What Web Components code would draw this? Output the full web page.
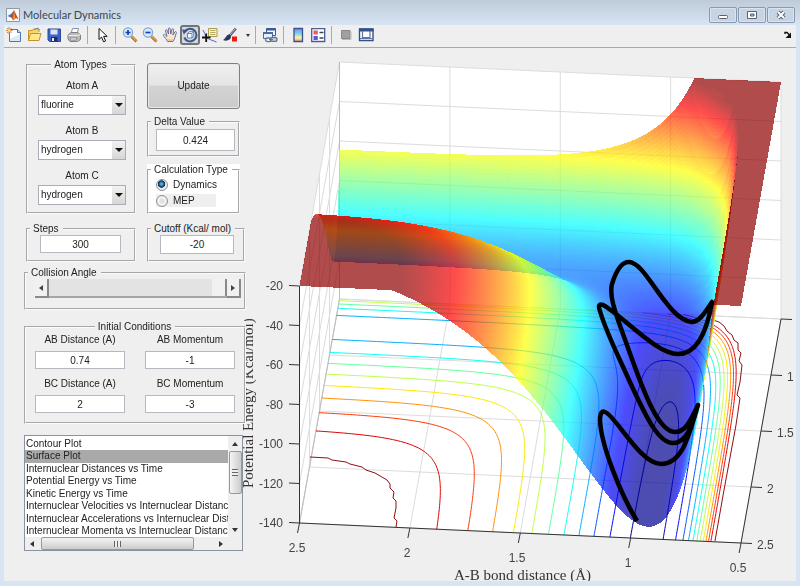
<!DOCTYPE html>
<html lang="en">
<head>
<meta charset="utf-8">
<title>Molecular Dynamics</title>
<style>
body{margin:0;background:#efefef;color:#222;font:10px/12px "Liberation Sans",Arial,sans-serif}
</style>
</head>
<body>
<md-window></md-window>
<script>
const define = (name, html, setup) => customElements.define(name, class extends HTMLElement {
  connectedCallback() {
    if (this.shadowRoot) return;
    const root = this.attachShadow({mode: 'open'});
    root.innerHTML = typeof html === 'function' ? html(this) : html;
    if (setup) setup(root, this);
  }
});

/* ---------- toolbar ---------- */
const icons = {
  new: '<path d="M3.500 2.500h8l3 3v9h-11z" fill="#fff" stroke="#4c76b5"/><path d="M4 12l10-5v7H4z" fill="#dde9f8"/><path d="M11.500 2.500v3h3" fill="#c6d8ef" stroke="#4c76b5"/><path d="M3 0v7M0 3.500h6.500M1 1l4.500 5M5.500 1L1 6" stroke="#d8814c"/><circle cx="3.200" cy="3.500" r="1.300" fill="#ffe9a0"/>',
  open: '<path d="M2.500 13.500v-10h4l1-1.500h5.500v3" fill="#f6d667" stroke="#c49325"/><path d="M2.500 13.500L4.500 6.500h10.500l-2 7z" fill="#ffe88c" stroke="#c49325"/><path d="M8 2.500l4-1.500 1.500 2" fill="none" stroke="#6b92b4"/>',
  save: '<path d="M2 2h12.500v12.500H3.500L2 13z" fill="#3f63c4" stroke="#2f479c"/><path d="M4.500 2.500h7v5h-7z" fill="#d9e5f7"/><path d="M5 10h6.500v4.500H5z" fill="#1d2e69"/><path d="M6 11h2v3H6z" fill="#e9eef8"/>',
  print: '<path d="M5 7L6.500 1.500h6L11 7z" fill="#fff" stroke="#8295b1"/><path d="M2 8l3-2.500h7L14.500 8v4.500L11.500 14.500H4L2 12z" fill="#b8bbc0" stroke="#7d8188"/><path d="M2.500 8.500h9l3-1" stroke="#eee" fill="none"/><path d="M4 11h7l-1 2H4.500z" fill="#f8f8f8" stroke="#777" stroke-width=".7"/><circle cx="12.500" cy="10" r=".8" fill="#d6bb3c"/>',
  pointer: '<path d="M5 1.500v11l2.600-2.400 2 4.700 2-.9-2-4.500h3.600z" fill="#fff" stroke="#111"/>',
  zoomin: '<path d="M9.500 9.500l5 5" stroke="#b9772c" stroke-width="3"/><path d="M9.500 9l4.800 4.800" stroke="#f0bd73"/><circle cx="6" cy="5.500" r="4.600" fill="#d5ecfb" stroke="#80a9d6" stroke-width="1.300"/><path d="M3.500 5.500h5M6 3v5" stroke="#1d3bb0" stroke-width="1.700"/>',
  zoomout: '<path d="M9.500 9.500l5 5" stroke="#b9772c" stroke-width="3"/><path d="M9.500 9l4.800 4.800" stroke="#f0bd73"/><circle cx="6" cy="5.500" r="4.600" fill="#d5ecfb" stroke="#80a9d6" stroke-width="1.300"/><path d="M3.500 5.500h5" stroke="#1d3bb0" stroke-width="1.700"/>',
  hand: '<path d="M5.500 14.500C4.500 12 2.500 10.500 1.500 8.500c-.3-1.300 1.100-1.500 1.800-.6L5 9.500 3.500 4c-.2-1.500 1.300-1.700 1.700-.5L6.500 7 6.300 2c0-1.500 1.600-1.500 1.900-.1L8.800 7l1-4.500c.4-1.300 1.800-1 1.700.3L11 8l1.800-3c.8-1 2-.3 1.500.9-1 2.500-1.300 6-3.300 8.600z" fill="#fbe3c8" stroke="#576a9c" stroke-width=".9"/><path d="M5.500 12.500c2 1 4 1 6 0" stroke="#dfae80" fill="none"/>',
  rotate: '<path d="M3.200 4.200A6.300 6.300 0 1 1 2.300 10.500" fill="none" stroke="#38578f" stroke-width="2"/><path d="M0 2.500l6 .5-4.200 4.500z" fill="#38578f"/><path d="M5.500 6.500h4.500v4.500H5.500zM5.500 6.500l2-1.800h4.200v4.500L10 11M10 6.500l1.700-1.800" fill="#f3f7fd" stroke="#4d6a9f" stroke-width=".8"/>',
  cursor: '<path d="M1 3c1.500 3 2 4 2.500 6s4 3.500 11 6" fill="none" stroke="#665ae2"/><path d="M6.500 1.500h8.500v8H6.500z" fill="#fbf6b4" stroke="#a69b51"/><path d="M8 3.500h5.500M8 5.500h5.500M8 7.500h5.500" stroke="#b7ad69"/><path d="M0 10.500h8.500M4.200 6.500v8.500" stroke="#111" stroke-width="1.800"/>',
  brush: '<path d="M13.800 1.500L7.500 9" stroke="#4c5869" stroke-width="2.600"/><path d="M13.500 1.500L8 8" stroke="#b3c1d1"/><path d="M7.500 7.500c-3-.5-3 3-6.500 5.500 3.500 1.700 8 0 8-3.500z" fill="#293b5d"/><path d="M10 9.500h5v5h-5z" fill="#f01a13"/>',
  link: '<path d="M4.500 1.500h9v7h-9z" fill="#eff5ff" stroke="#3c5998"/><path d="M4 2.500h10" stroke="#3c5998" stroke-width="2"/><path d="M1.500 5.500h9v6h-9z" fill="#e6effb" stroke="#4b69a4"/><path d="M1 6h10" stroke="#4b69a4" stroke-width="2"/><rect x="3.500" y="11" width="6" height="3.600" rx="1.800" fill="#e9eef4" stroke="#61758f" stroke-width="1.300"/><rect x="8.500" y="10.500" width="6.500" height="3.800" rx="1.900" fill="#cbd5e1" stroke="#61758f" stroke-width="1.300"/><path d="M7 12.700h4" stroke="#4e617b"/>',
  colorbar: '<defs><linearGradient id="cb" x2="0" y2="1"><stop stop-color="#8a86ee"/><stop offset=".4" stop-color="#79d5f0"/><stop offset=".7" stop-color="#fff29b"/><stop offset="1" stop-color="#f59a72"/></linearGradient></defs><path d="M4 1.500h8.500v13H4z" fill="url(#cb)" stroke="#39518c" stroke-width="1.300"/>',
  legend: '<path d="M1.700 1.700h13v12.800h-13z" fill="#fff" stroke="#465f99" stroke-width="1.300"/><path d="M3.500 3.500h4.300v4H3.500z" fill="#ef5661"/><path d="M3.500 9h4.300v4H3.500z" fill="#5a58df"/><path d="M9.500 5.500h4M9.500 11h4" stroke="#444" stroke-width="1.400"/>',
  hide: '<path d="M3.500 3.500h8.500v8H3.500z" fill="#a0a0a0" stroke="#888"/><path d="M4 12.500h9v-8" fill="none" stroke="#bbb"/>',
  dock: '<path d="M1.500 2h13.500v11.500H1.500z" fill="#fff" stroke="#354f8d" stroke-width="1.400"/><path d="M1 3h14.500" stroke="#354f8d" stroke-width="3"/><path d="M4.500 4v6.500h7.500V4M2 11.500h12.500" fill="none" stroke="#60759f" stroke-width="1.200"/>'
};
define('md-tool', el => `<style>
:host{display:block;flex:none}
button{box-sizing:border-box;display:grid;place-items:center;width:20px;height:20px;margin:0;padding:0;border:1px solid transparent;border-radius:3px;background:none}
button[aria-pressed=true]{border:2px solid #747474;background:#d5d9df}
svg{display:block;width:16px;height:16px}
</style><button type="button" aria-label="${el.getAttribute('label')}" aria-pressed="${el.hasAttribute('pressed')}"><svg viewBox="0 0 16 16" fill="none">${icons[el.getAttribute('icon')]}</svg></button>`);

const tool = (i, l, p = '') => `<md-tool icon="${i}" label="${l}" ${p}></md-tool>`;
define('md-toolbar', `<style>
:host{display:flex;align-items:center;box-sizing:border-box;height:23px;padding-bottom:2px;background:#efefef;border-bottom:1px solid #aaa}
i{flex:none;width:1px;height:18px;margin:0 4px 0 3px;background:#aaa}
.drop{display:grid;place-items:center;width:12px;height:20px;border:0;padding:0;background:none}
.drop::before{content:"";border:2px solid transparent;border-top:3px solid #333;border-bottom:0;margin-left:4px}
.undock{margin:0 4px 0 auto;padding:0;border:0;background:none;width:8px;height:8px}
svg{display:block}
</style>${tool('new','New Figure')}${tool('open','Open File')}${tool('save','Save Figure')}${tool('print','Print Figure')}<i></i>${tool('pointer','Edit Plot')}<i></i>${tool('zoomin','Zoom In')}${tool('zoomout','Zoom Out')}${tool('hand','Pan')}${tool('rotate','Rotate 3D','pressed')}${tool('cursor','Data Cursor')}${tool('brush','Brush Data')}<button class="drop" type="button" aria-label="Brush colours"></button><i></i>${tool('link','Link Plot')}<i></i>${tool('colorbar','Insert Colorbar')}${tool('legend','Insert Legend')}<i></i>${tool('hide','Hide Plot Tools')}${tool('dock','Show Plot Tools')}
<button class="undock" type="button" aria-label="Dock Figure"><svg width="8" height="8" viewBox="0 0 8 8"><path d="M1 3V1.500h2L5.500 4" fill="none" stroke="#111" stroke-width="1.400"/><path d="M7 1.500V7H1.500z" fill="#111"/></svg></button>`);

define('md-titlebar', `<style>
:host{display:flex;align-items:center;box-sizing:border-box;height:25px;padding:5px 5px 0 6px;background:linear-gradient(#bfcbd8,#d6e4f3)}
.logo{width:14px;height:14px;margin-right:3px}
h1{margin:0;flex:1;font:11px/16px Lato,"Open Sans",sans-serif;color:#3c4650}
button{box-sizing:border-box;display:grid;place-items:center;width:28px;height:16px;margin-left:1px;padding:0;border:1px solid #8899b0;border-radius:2px;background:#c7d4e4;box-shadow:inset 0 0 0 1px #d9e4f0}
</style><svg class="logo" viewBox="0 0 14 14"><path d="M.5.500h13v13H.5z" fill="#f7f8fa" stroke="#8d99a8"/><path d="M1.500 8L5 6l3-3.500L6 10l-1.500-.8z" fill="#3f74ac"/><path d="M8 2l4.500 9.500-2.500-1.500-3 2.500L5.500 9z" fill="#cc481c"/><path d="M8 2l1.200 8L7 12z" fill="#f39a40"/></svg>
<h1>Molecular Dynamics</h1>
<button type="button" aria-label="Minimize"><svg width="12" height="10"><rect x="1.500" y="5.500" width="9" height="3" rx="1" fill="#fff" stroke="#5b6170"/></svg></button>
<button type="button" aria-label="Maximize"><svg width="12" height="10"><path d="M1.500 1.500h9v7h-9z" fill="#fff" stroke="#5b6170"/><path d="M4.500 4h3.500v2H4.500z" fill="#b4c0cf" stroke="#5b6170"/></svg></button>
<button type="button" aria-label="Close"><svg width="12" height="10"><path d="M3 2l6 6M9 2L3 8" stroke="#5b6170" stroke-width="4"/><path d="M3 2l6 6M9 2L3 8" stroke="#fff" stroke-width="2"/></svg></button>`);

/* ---------- controls ---------- */
define('md-group', el => `<style>
:host{display:block}
fieldset{box-sizing:border-box;height:100%;min-width:0;margin:0;padding:0;border:2px groove #fbfbfb}
legend{margin-left:2px;padding:0 4px 0 3px;height:12px;line-height:12px;white-space:nowrap}
:host([centered]) legend{margin:0 auto}
</style><fieldset><legend>${el.getAttribute('label')}</legend><slot></slot></fieldset>`);

define('md-select', el => `<style>
:host{display:flex;flex-direction:column;align-items:center;gap:3px}
.box{display:grid;width:88px;height:20px}
select{grid-area:1/1;appearance:none;box-sizing:border-box;width:100%;height:20px;margin:0;padding:0 16px 0 2px;border:1px solid #a9adb5;border-radius:0;background:#fff;color:#222;font:inherit}
.arrow{grid-area:1/1;justify-self:end;display:grid;place-items:center;width:13px;margin:1px;background:linear-gradient(#f2f2f2,#d6d6d6);pointer-events:none}
.arrow::before{content:"";border:4px solid transparent;border-top:4px solid #111;border-bottom:0}
</style><label for="s">${el.getAttribute('label')}</label><span class="box"><select id="s">${['fluorine','hydrogen','chlorine'].map(a => `<option${a === el.getAttribute('value') ? ' selected' : ''}>${a}</option>`).join('')}</select><span class="arrow"></span></span>`);

define('md-field', el => `<style>
:host{display:flex;flex-direction:column;align-items:center;gap:5px}
input{box-sizing:border-box;width:100%;height:var(--h,18px);margin:0;padding:0;border:1px solid #b6b8c0;background:#fff;color:#222;font:inherit;text-align:center}
</style>${el.hasAttribute('label') ? `<label for="f">${el.getAttribute('label')}</label>` : ''}<input id="f" type="text" value="${el.getAttribute('value')}" aria-label="${el.getAttribute('label') || el.getAttribute('name')}">`);

define('md-button', `<style>
:host{display:block}
button{width:100%;height:46px;margin:0;padding:0;border:1px solid #808080;border-radius:3px;background:linear-gradient(#f0f0f0,#e4e4e4 48%,#d3d3d3 50%,#cbcbcb);box-shadow:inset 0 0 0 1px #e8e8e8;color:#222;font:inherit}
</style><button type="button"><slot></slot></button>`);

define('md-radios', `<style>
:host{display:block;padding:1px 0 3px 7px}
label{display:flex;align-items:center;gap:4px;width:60px;height:16px}
label.shade{background:linear-gradient(#efefef,#efefef) 0 1px/100% 13px no-repeat}
input{appearance:none;box-sizing:border-box;flex:none;width:12px;height:12px;margin:0 1px 0 0;border:1px solid #8f9297;border-radius:50%;background:radial-gradient(#e2e2e2 30%,#f6f6f6 50%,#ccc)}
input:checked{background:radial-gradient(circle at 45% 40%,#7fd0ee,#1d608c 28%,#0e3350 42%,#e6ecf2 50%)}
</style><label><input type="radio" name="calc" checked>Dynamics</label><label class="shade"><input type="radio" name="calc">MEP</label>`);

define('md-slider', `<style>
:host{display:flex;height:19px}
button{box-sizing:border-box;width:14px;margin:0;padding:0;display:grid;place-items:center;border:solid;border-width:0 2px 2px 0;border-color:#8a8a8a;background:#f1f1f1}
button::before{content:"";border:3px solid transparent}
.l::before{border-right:4px solid #444;border-left:0}
.r::before{border-left:4px solid #444;border-right:0}
input{appearance:none;box-sizing:border-box;flex:1;min-width:0;height:19px;margin:0;background:#e3e3e3;border-bottom:2px solid #a5a5a5}
input::-webkit-slider-thumb{appearance:none;box-sizing:border-box;width:15px;height:17px;background:#f1f1f1;border:solid #8a8a8a;border-width:0 2px 0 0}
</style><button class="l" type="button" aria-label="Decrease"></button><input type="range" min="0" max="180" value="180" aria-label="Collision Angle"><button class="r" type="button" aria-label="Increase"></button>`);

define('md-list', `<style>
:host{display:grid;grid-template-columns:1fr 14px;grid-template-rows:101px 13px;box-sizing:border-box;border:1px solid #8b93a0;background:#fff}
select{grid-area:1/1;box-sizing:border-box;width:100%;height:101px;min-width:0;margin:0;padding:2px 0 0;border:0;outline:0;background:#fff;color:#222;font:inherit;overflow:hidden}
option{box-sizing:border-box;height:12px;min-height:12px;padding:0 0 0 1px;line-height:12px;overflow:hidden;white-space:nowrap}
option:nth-child(even){height:13px;min-height:13px}
option:checked{background:#a9a9a9 linear-gradient(#a9a9a9,#a9a9a9);color:#222}
.bar{display:flex;align-items:center;background:#efefef}
.v{flex-direction:column;grid-area:1/2;padding:6px 0 5px}
.h{grid-area:2/1;padding:0 5px}
.corner{background:#efefef}
.bar::before,.bar::after{content:"";border:3px solid transparent}
.v::before{border-bottom:4px solid #333;border-top:0}.v::after{border-top:4px solid #333;border-bottom:0}
.h::before{border-right:4px solid #333;border-left:0}.h::after{border-left:4px solid #333;border-right:0}
b{box-sizing:border-box;display:grid;place-items:center;border:1px solid #999;border-radius:2px}
.v b{width:13px;height:43px;margin:5px 0 auto;background:linear-gradient(90deg,#f4f4f4,#ccc)}
.h b{height:13px;width:153px;margin:0 auto 0 7px;background:linear-gradient(#f4f4f4,#ccc)}
.v b::before{content:"";width:6px;height:7px;background:repeating-linear-gradient(#666 0 1px,#eee 1px 3px)}
.h b::before{content:"";height:6px;width:7px;background:repeating-linear-gradient(90deg,#666 0 1px,#eee 1px 3px)}
</style><select size="8" aria-label="Plot type"><option>Contour Plot</option><option selected>Surface Plot</option><option>Internuclear Distances vs Time</option><option>Potential Energy vs Time</option><option>Kinetic Energy vs Time</option><option>Internuclear Velocities vs Internuclear Distance</option><option>Internuclear Accelerations vs Internuclear Distance</option><option>Internuclear Momenta vs Internuclear Distance</option></select><span class="bar v"><b></b></span><span class="bar h"><b></b></span><span class="corner"></span>`);

/* ---------- surface plot ---------- */
const PX = 246, PY = 48, PW = 550, PH = 533;
// Oblique projection of (AB, BC, energy) to plot units.
const project = (x, y, z) => [
  299.5 + (2.5 - x) * 220.75 + (2.5 - y) * 20,
  523 + (2.5 - x) * 10 - (2.5 - y) * 112 - (z + 140) * 1.975
];
// LEPS potential of the collinear F-H-H system, kcal/mol.
const FH = [134, 2.2187, 0.921, 0.2], HH = [105, 2, 0.7419, 0.167];
function pair([d, b, r0, k], r) {
  const e = Math.exp(-b * (r - r0)), c = d / (4 * (1 + k));
  return [c * ((3 + k) * e * e - (2 + 6 * k) * e), c * ((1 + 3 * k) * e * e - (6 + 2 * k) * e)];
}
function energy(x, y) {
  const [q1, a] = pair(FH, x), [q2, b] = pair(HH, y), [q3, c] = pair(FH, x + y);
  return Math.min(-20, q1 + q2 + q3 - Math.sqrt(((a - b) ** 2 + (b - c) ** 2 + (c - a) ** 2) / 2));
}
function jet(z) {
  const t = Math.max(.016, Math.min(.984, (z + 134) / 114));
  const f = c => Math.max(0, Math.min(1, 1.5 - Math.abs(4 * t - c))) * 255;
  return [f(3), f(2), f(1)];
}
function paint(canvas) {
  const g = canvas.getContext('2d', {willReadFrequently: true});
  g.translate(-PX, -PY);
  const line = (pts, color, width = 1) => {
    g.beginPath(); pts.forEach((p, i) => i ? g.lineTo(...p) : g.moveTo(...p));
    g.strokeStyle = color; g.lineWidth = width; g.stroke();
  };
  const face = pts => { g.beginPath(); pts.forEach(p => g.lineTo(...project(...p))); g.fillStyle = '#fff'; g.fill(); };
  face([[2.5,2.5,-140],[.5,2.5,-140],[.5,.5,-140],[2.5,.5,-140]]);
  face([[2.5,.5,-140],[.5,.5,-140],[.5,.5,-20],[2.5,.5,-20]]);
  face([[2.5,2.5,-140],[2.5,.5,-140],[2.5,.5,-20],[2.5,2.5,-20]]);
  const grid = '#dcdcdc', P = project;
  for (let v = .5; v <= 2.5; v += .5) {
    line([P(v,2.5,-140), P(v,.5,-140), P(v,.5,-20)], grid);
    line([P(2.5,v,-20), P(2.5,v,-140), P(.5,v,-140)], grid);
  }
  for (let z = -140; z <= -20; z += 20) line([P(2.5,2.5,z), P(2.5,.5,z), P(.5,.5,z)], grid);
  line([P(2.5,2.5,-140), P(2.5,.5,-140), P(2.5,.5,-20)], '#bdbdbd');

  // Contours on the floor, by marching squares.
  const m = 160, step = 2 / m, val = [];
  for (let j = 0; j <= m; j++) { val.push([]); for (let i = 0; i <= m; i++) val[j].push(energy(2.5 - i * step, .5 + j * step)); }
  for (let k = 1; k < 12; k++) {
    const level = -20.3 - 10 * k, [r, gr, b] = jet(level);
    g.beginPath();
    for (let j = 0; j < m; j++) for (let i = 0; i < m; i++) {
      const c = [[i,j],[i+1,j],[i+1,j+1],[i,j+1]], hit = [];
      for (let e = 0; e < 4; e++) {
        const [ax, ay] = c[e], [bx, by] = c[(e + 1) % 4], va = val[ay][ax], vb = val[by][bx];
        if ((va < level) !== (vb < level)) {
          const t = (level - va) / (vb - va);
          hit.push(P(2.5 - (ax + (bx - ax) * t) * step, .5 + (ay + (by - ay) * t) * step, -140));
        }
      }
      for (let h = 0; h + 1 < hit.length; h += 2) { g.moveTo(...hit[h]); g.lineTo(...hit[h + 1]); }
    }
    g.strokeStyle = `rgb(${r|0},${gr|0},${b|0})`; g.lineWidth = 1; g.stroke();
  }
  line([[310,457],[328,458],[332,460],[346,462],[350,464],[362,467],[366,470],[375,473],[387,480],[390,484],[390,488],[394,492],[393,498],[396,501],[396,508],[394,518],[397,521],[396,527]], '#8f1010');
  line([[713,320],[719,322],[724,326],[727,331],[732,335],[734,340],[738,343],[738,350],[741,353],[739,361],[742,365],[740,382],[737,395],[740,398],[736,425],[724,490],[715,541]], '#8f1010');

  // Translucent surface, painted far to near.
  const img = g.getImageData(0, 0, PW, PH), d = Float32Array.from(img.data), alpha = .7;
  const tri = (a, b, c, col) => {
    let area = (b[0]-a[0])*(c[1]-a[1]) - (b[1]-a[1])*(c[0]-a[0]);
    if (area < 0) { [b, c] = [c, b]; area = -area; }
    if (!area) return;
    const x0 = Math.max(0, Math.floor(Math.min(a[0],b[0],c[0]))), x1 = Math.min(PW-1, Math.ceil(Math.max(a[0],b[0],c[0])));
    const y0 = Math.max(0, Math.floor(Math.min(a[1],b[1],c[1]))), y1 = Math.min(PH-1, Math.ceil(Math.max(a[1],b[1],c[1])));
    const side = (p, q, x, y) => (q[0]-p[0])*(y-p[1]) - (q[1]-p[1])*(x-p[0]);
    for (let y = y0; y <= y1; y++) for (let x = x0; x <= x1; x++) {
      const u = x + .5013, v = y + .5017;
      if (side(a,b,u,v) >= 0 && side(b,c,u,v) >= 0 && side(c,a,u,v) >= 0) {
        const o = (y * PW + x) * 4;
        for (let n = 0; n < 3; n++) d[o+n] = d[o+n] * (1 - alpha) + col[n] * alpha;
        d[o+3] = 255;
      }
    }
  };
  const n = 400, s = 2 / n;
  const vert = (i, j) => { const x = 2.5 - i * s, y = .5 + j * s, z = energy(x, y), p = P(x, y, z); return [p[0] - PX, p[1] - PY, z]; };
  let row = Array.from({length: n + 1}, (_, i) => vert(i, 0));
  for (let j = 1; j <= n; j++) {
    const next = Array.from({length: n + 1}, (_, i) => vert(i, j));
    for (let i = 0; i < n; i++) {
      const a = row[i], b = row[i+1], c = next[i+1], e = next[i], col = jet((a[2] + b[2] + c[2] + e[2]) / 4);
      tri(a, b, c, col); tri(a, c, e, col);
    }
    row = next;
  }
  img.data.set(d);
  g.putImageData(img, 0, 0);
}
const ticks = (() => {
  let lines = 'M299.500 286V523L741 543L781 319', text = '';
  for (let k = 0; k < 7; k++) {
    const y = 286 + k * 39.5;
    lines += `M299.500 ${y}L289 ${y - .5}`;
    text += `<text x="283" y="${Math.round(y) + 4}" text-anchor="end">${-20 - 20 * k}</text>`;
  }
  ['2.5', '2', '1.5', '1', '0.5'].forEach((t, k) => {
    const x = 299.5 + k * 110.4, y = 523 + k * 5;
    lines += `M${x} ${y}l-2 10`;
    text += `<text x="${Math.round(x) - 3}" y="${Math.round(y) + 29}" text-anchor="middle">${t}</text>`;
  });
  ['', '1', '1.5', '2', '2.5'].forEach((t, k) => {
    const x = 781 - 10 * k, y = 319 + 56 * k;
    lines += `M${x} ${y}l11 .5`;
    if (t) text += `<text x="${x + 16}" y="${y + 6}">${t}</text>`;
  });
  return `<path d="${lines}" fill="none" stroke="#333"/><g fill="#444" font-size="12">${text}</g>`;
})();
define('md-surface', `<style>
:host{display:grid;align-content:start}
canvas,svg{grid-area:1/1;display:block;width:100%;height:auto}
svg{overflow:visible}
.tex{font-family:"Liberation Serif",serif;font-size:15px;fill:#333}
</style><canvas width="${PW}" height="${PH}"></canvas>
<svg viewBox="${PX} ${PY} ${PW} ${PH}" font-family="Liberation Sans, Arial, sans-serif" role="img" aria-label="Potential energy surface with trajectory">${ticks}
<path d="M637 521C620 493 601 445 600 420Q600 410 605 412C616 416 640 464 661 464C682 464 688 438 698 405C690 421 686 432 675 432C655 432 637 372 623 334C615 312 609 295 612 284C616 271 622 262 629 262C646 262 667 320 692 322C701 321 707 309 712 302C708 325 699 354 678 354C656 354 622 315 603 305Q597 303 600 311C606 332 617 353 629 380C643 410 657 443 673 443C687 443 692 425 698 405" fill="none" stroke="#000" stroke-width="4.500" stroke-linejoin="round"/>
<text class="tex" x="454" y="580">A-B bond distance (Å)</text>
<text class="tex" transform="translate(253 488) rotate(-90)">Potential Energy (Kcal/mol)</text></svg>`,
root => paint(root.querySelector('canvas')));

/* ---------- window ---------- */
define('md-controls', `<style>
:host{display:block;box-sizing:border-box;padding:11px 0 0 20px}
.top{display:grid;grid-template-columns:110px 98px;column-gap:11px;row-gap:9px;padding-left:2px}
.stack{display:flex;flex-direction:column;gap:7px;padding-top:4px;width:93px}
md-group{background:#efefef}
md-group.white{background:#fff}
.atoms{display:flex;flex-direction:column;gap:10px;padding:9px 7px 7px 9px}
.delta{--h:22px;padding:1px 3px 4px 7px}
.steps{padding:0 13px 7px 12px}
.cut{--h:19px;padding:0 9px 6px 11px}
.angle{margin-top:5px}
.angle md-slider{padding:0 3px 10px 9px}
.init{margin-top:11px}
.grid{display:grid;grid-template-columns:1fr 1fr;gap:9px 20px;padding:1px 9px 9px 9px}
md-list{width:219px;margin-top:11px}
</style>
<div class="top">
<md-group label="Atom Types" centered><div class="atoms"><md-select label="Atom A" value="fluorine"></md-select><md-select label="Atom B" value="hydrogen"></md-select><md-select label="Atom C" value="hydrogen"></md-select></div></md-group>
<div class="stack"><md-button>Update</md-button>
<md-group label="Delta Value"><md-field class="delta" name="Delta Value" value="0.424"></md-field></md-group>
<md-group class="white" label="Calculation Type"><md-radios></md-radios></md-group></div>
<md-group label="Steps"><md-field class="steps" name="Steps" value="300"></md-field></md-group>
<md-group label="Cutoff (Kcal/ mol)"><md-field class="cut" name="Cutoff" value="-20"></md-field></md-group>
</div>
<md-group class="angle" label="Collision Angle"><md-slider></md-slider></md-group>
<md-group class="init" label="Initial Conditions" centered><div class="grid"><md-field label="AB Distance (A)" value="0.74"></md-field><md-field label="AB Momentum" value="-1"></md-field><md-field label="BC Distance (A)" value="2"></md-field><md-field label="BC Momentum" value="-3"></md-field></div></md-group>
<md-list></md-list>`);

define('md-window', `<style>
:host{display:block;box-sizing:border-box;min-height:100vh;background:#d7e4f2}
.client{margin:0 4px 5px}
main{display:grid;grid-template-columns:242px minmax(0,1fr);background:#efefef;overflow:hidden}
md-controls{position:relative;z-index:1}
</style><md-titlebar></md-titlebar><div class="client"><md-toolbar></md-toolbar><main><md-controls></md-controls><md-surface></md-surface></main></div>`);
</script>
</body>
</html>
